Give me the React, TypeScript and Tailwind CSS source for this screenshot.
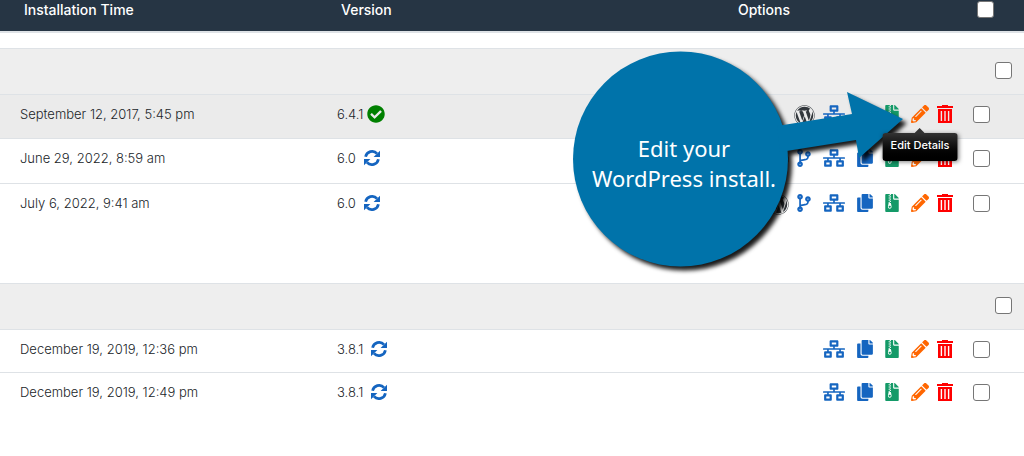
import {
  FaCheckCircle,
  FaWordpress,
  FaCodeBranch,
  FaNetworkWired,
  FaCopy,
  FaFileArchive,
  FaPencilAlt,
} from "react-icons/fa";

type Install = {
  time: string;
  version: string;
  current?: boolean;
  wordpress?: boolean;
  branch?: boolean;
  tooltip?: boolean;
};

const firstGroup: Install[] = [
  { time: "September 12, 2017, 5:45 pm", version: "6.4.1", current: true, wordpress: true, tooltip: true },
  { time: "June 29, 2022, 8:59 am", version: "6.0", wordpress: true, branch: true },
  { time: "July 6, 2022, 9:41 am", version: "6.0", wordpress: true, branch: true },
];

const secondGroup: Install[] = [
  { time: "December 19, 2019, 12:36 pm", version: "3.8.1" },
  { time: "December 19, 2019, 12:49 pm", version: "3.8.1" },
];

const boxClass =
  "block size-[17px] appearance-none rounded-[3px] border border-[#767676] bg-white checked:bg-[#1565c0]";

function TrashIcon() {
  return (
    <svg viewBox="0 0 16 18" className="h-[18px] w-4" fill="currentColor" aria-hidden="true">
      <path d="M5 0h6v1h5v2H0V1h5z" />
      <path fillRule="evenodd" d="M1 4h14v14H1zM3.7 6v10h1.4V6zM7.3 6v10h1.4V6zM10.9 6v10h1.4V6z" />
    </svg>
  );
}

function RefreshIcon() {
  return (
    <svg viewBox="0 0 16 16" className="block size-4" aria-hidden="true">
      <path d="M1.6 6.8A6.6 6.6 0 0 1 13 3.6M14.4 9.2A6.6 6.6 0 0 1 3 12.4" fill="none" stroke="currentColor" strokeWidth="2.7" />
      <path d="M16 0.8V7H9.6zM0 15.2V9H6.4z" fill="currentColor" />
    </svg>
  );
}

function InstallRow({ item, height }: { item: Install; height: string }) {
  return (
    <tr className={`border-t border-[#dee2e6] align-top ${height} ${item.current ? "bg-[#ebebeb]" : ""}`}>
      <td className="pl-5 pt-[7px] text-[13px] leading-6">{item.time}</td>
      <td className="pl-3 pt-[7px] text-[13px] leading-6">
        <div className={item.current ? "flex items-center gap-1" : "flex items-center gap-2"}>
          <span>{item.version}</span>
          {item.current ? (
            <FaCheckCircle className="size-[18px] text-[#008000]" />
          ) : (
            <button aria-label="Update" className="text-[#1565c0]">
              <RefreshIcon />
            </button>
          )}
        </div>
      </td>
      <td className="pt-[7px]">
        <div className="flex h-6 items-center justify-end gap-3 pr-3">
          {item.wordpress && (
            <a href="#admin" aria-label="WordPress admin" className="-mr-1 text-[#32373c]">
              <FaWordpress className="mt-1 size-[21px]" />
            </a>
          )}
          {item.branch && (
            <a href="#staging" aria-label="Staging" className="text-[#1565c0]">
              <FaCodeBranch className="h-[18px] w-[14px]" />
            </a>
          )}
          <a href="#clone" aria-label="Clone" className="text-[#1565c0]">
            <FaNetworkWired className="h-[18px] w-[22px]" />
          </a>
          <a href="#copy" aria-label="Copy" className="text-[#1565c0]">
            <FaCopy className="h-[18px] w-4" />
          </a>
          <a href="#backup" aria-label="Backup" className="text-[#149a68]">
            <FaFileArchive className="h-[18px] w-[14px]" />
          </a>
          <a href="#edit" aria-label="Edit Details" className="relative text-[#ff6600]">
            <FaPencilAlt className="size-[18px]" />
            {item.tooltip && (
              <span
                role="tooltip"
                className="absolute left-1/2 top-7 z-20 -translate-x-1/2 whitespace-nowrap rounded-[3px] bg-gradient-to-b from-[#333] to-black px-2 pb-1.5 pt-0.5 font-['Inter',sans-serif] text-[11px] font-medium leading-5 text-white shadow-[1px_1px_4px_rgba(0,0,0,0.5)]"
              >
                <svg viewBox="0 0 10 5" className="absolute -top-[5px] left-1/2 h-[5px] w-[10px] -translate-x-1/2">
                  <path d="M0 5L5 0L10 5z" fill="#333" />
                </svg>
                Edit Details
              </span>
            )}
          </a>
          <a href="#remove" aria-label="Remove" className="-ml-1 text-[#ff0000]">
            <TrashIcon />
          </a>
        </div>
      </td>
      <td className="pl-2 pt-[11px]">
        <input type="checkbox" aria-label={item.time} className={boxClass} />
      </td>
    </tr>
  );
}

function GroupRow({ label }: { label: string }) {
  return (
    <tr className="h-[46px] border-t border-[#dee2e6] bg-[#eeeeee] align-top">
      <td colSpan={4} className="pr-3 pt-[13px]">
        <div className="flex justify-end">
          <input type="checkbox" aria-label={label} className={boxClass} />
        </div>
      </td>
    </tr>
  );
}

function Callout() {
  return (
    <div className="pointer-events-none absolute left-[572px] top-[46px] z-10 h-[230px] w-[340px]">
      <svg viewBox="0 0 340 230" className="size-full overflow-visible" aria-hidden="true">
        <g fill="#0073aa" className="drop-shadow-[4px_4px_2px_rgba(0,0,0,0.9)]">
          <circle cx="108.5" cy="113" r="107.5" />
          <path d="M205 80L280 68L275 46L331 73L287 112L284 94L208 106z" />
        </g>
      </svg>
      <p className="absolute left-0 top-[87px] w-[224px] text-center font-['Noto_Sans',sans-serif] text-[22px] font-normal leading-[30px] text-white">
        Edit your
        <br />
        WordPress install.
      </p>
    </div>
  );
}

export default function App() {
  return (
    <main className="relative min-h-screen overflow-x-hidden bg-white font-['Inter',sans-serif] font-light text-[#212529]">
      <table className="w-full table-fixed border-collapse">
        <colgroup>
          <col className="w-[325px]" />
          <col className="w-[238px]" />
          <col />
          <col className="w-[59px]" />
        </colgroup>
        <thead>
          <tr className="h-8 border-b-2 border-[#dee2e6] bg-[#263544] align-top text-[14px] leading-5 text-white">
            <th className="pl-6 text-left font-medium">Installation Time</th>
            <th className="pl-4 text-left font-medium">Version</th>
            <th className="font-medium">Options</th>
            <th className="pl-3 pt-[1px]">
              <input type="checkbox" aria-label="Select all installations" className={boxClass} />
            </th>
          </tr>
        </thead>
        <tbody>
          <tr className="h-4">
            <td colSpan={4} />
          </tr>
          <GroupRow label="Select first group" />
          {firstGroup.map((item) => (
            <InstallRow key={item.time} item={item} height={item.current ? "h-11" : "h-[45px]"} />
          ))}
          <tr className="h-[55px]">
            <td colSpan={4} />
          </tr>
          <GroupRow label="Select second group" />
          {secondGroup.map((item) => (
            <InstallRow key={item.time} item={item} height="h-[43px]" />
          ))}
        </tbody>
      </table>
      <Callout />
    </main>
  );
}
